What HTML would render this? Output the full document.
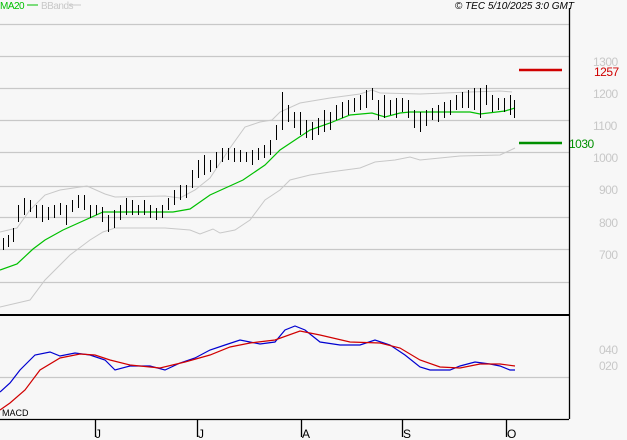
<!DOCTYPE html><html><head><meta charset="utf-8"><style>
html,body{margin:0;padding:0;background:#f7f7f7;width:627px;height:440px;overflow:hidden;font-family:"Liberation Sans",sans-serif}
</style></head><body>
<svg width="627" height="440" xmlns="http://www.w3.org/2000/svg" style="position:absolute;left:0;top:0">
<rect width="627" height="440" fill="#f7f7f7"/>
<g stroke="#c8c8c8" stroke-width="1.2">
<path d="M0 24.5H569M0 56.5H569M0 88.5H569M0 120.5H569M0 152.5H569M0 186.5H569M0 217.5H569M0 249.5H569M0 282.5H569M0 377.5H569"/>
</g>
<g fill="#c8c8c8" font-size="12" letter-spacing="-0.5">
<text x="593" y="66">1300</text><text x="593" y="98">1200</text><text x="593" y="130">1100</text>
<text x="593" y="162">1000</text><text x="599" y="194">900</text><text x="599" y="227">800</text><text x="599" y="259">700</text>
<text x="599" y="354">040</text><text x="599" y="370">020</text>
</g>
<g fill="none" stroke="#c8c8c8" stroke-width="1">
<polyline points="0,232 17,228 30,210 45,195 60,190 87,186 105,194 115,197 165,196 180,198 195,190 210,178 230,148 245,127 260,122 272,120 280,112 300,103 330,98 360,94 372,90 380,93 420,94 470,92 500,91 512,92"/>
<polyline points="0,307 30,300 45,280 70,255 90,240 103,232 115,228 165,228 190,230 200,234 213,229 220,233 235,230 250,220 265,200 280,190 290,180 310,175 330,172 360,168 375,162 395,160 410,157 420,160 440,158 460,156 500,155 515,148"/>
</g>
<polyline fill="none" stroke="#00c000" stroke-width="1.2" points="0,270 17,264 33,249 45,240 63,230 103,212 125,212 173,212 190,209 210,195 243,180 265,165 280,150 295,140 310,130 330,123 350,115 372,113 385,117 400,113 410,112 470,112 480,114 505,111 515,108"/>
<path fill="none" stroke="#000" stroke-width="1" shape-rendering="crispEdges" d="M3.5 238V250M8.5 235V247M13.5 228V242M18.5 205V222M24.5 198V215M30.5 200V212M36.5 205V218M42.5 205V222M48.5 207V220M54.5 205V218M60.5 203V215M66.5 205V225M72.5 200V212M78.5 195V208M84.5 195V210M90.5 205V218M96.5 205V215M102.5 207V222M108.5 215V232M114.5 210V228M120.5 205V220M126.5 198V215M132.5 200V215M138.5 205V215M144.5 200V215M150.5 205V218M156.5 208V220M162.5 205V218M168.5 198V210M174.5 190V205M180.5 185V200M186.5 185V198M192.5 170V188M198.5 160V178M204.5 155V175M210.5 160V172M216.5 152V168M222.5 148V162M228.5 148V160M234.5 148V162M240.5 150V162M246.5 152V162M252.5 150V165M258.5 148V160M264.5 145V158M270.5 140V155M276.5 125V140M282.5 92V130M288.5 105V122M294.5 112V128M300.5 112V135M306.5 120V138M312.5 122V140M318.5 118V135M324.5 110V132M330.5 112V130M336.5 105V120M342.5 102V118M348.5 100V115M354.5 98V112M360.5 95V110M366.5 90V108M372.5 88V100M378.5 100V120M384.5 95V118M390.5 100V115M396.5 98V118M402.5 98V112M408.5 100V118M414.5 110V128M420.5 112V132M426.5 110V126M432.5 108V120M438.5 105V122M444.5 102V118M450.5 100V115M456.5 95V110M462.5 92V108M468.5 90V108M474.5 88V110M480.5 88V118M486.5 85V105M492.5 95V112M498.5 98V110M504.5 98V112M510.5 95V115M514.5 100V118"/>
<path stroke="#d00000" stroke-width="2.5" d="M519 70H562"/>
<path stroke="#009000" stroke-width="2.5" d="M519 143H562"/>
<text x="594" y="76" fill="#d00000" font-size="12" letter-spacing="-0.5">1257</text>
<text x="569" y="148" fill="#009000" font-size="12" letter-spacing="-0.5">1030</text>
<polyline fill="none" stroke="#0000d0" stroke-width="1.2" points="0,392 10,383 20,370 35,355 50,352 60,356 75,353 90,355 105,360 115,370 130,366 150,366 165,370 180,363 195,358 210,350 225,345 240,340 260,344 275,342 285,330 295,326 305,330 320,342 340,345 360,345 375,340 390,345 405,355 420,367 430,370 450,370 460,366 475,362 490,364 500,366 510,370 515,370"/>
<polyline fill="none" stroke="#d00000" stroke-width="1.2" points="0,410 10,403 25,390 40,370 60,358 80,354 95,355 110,360 130,365 160,368 185,362 210,355 230,347 250,343 275,340 300,331 320,335 350,342 380,343 400,348 420,360 440,367 460,368 480,364 500,364 515,366"/>
<path stroke="#000" stroke-width="1.3" fill="none" d="M569.5 8V419M0 419.5H569M95.5 419V437M197.5 419V437M301.5 419V437M402.5 419V437M506.5 419V437"/>
<path stroke="#000" stroke-width="2" d="M0 315H569"/>
<g font-size="12" fill="#000"><text x="95" y="438">J</text><text x="198" y="438">J</text><text x="302" y="438">A</text><text x="403" y="438">S</text><text x="507" y="438">O</text></g>
<text x="2" y="416" font-size="9" fill="#000">MACD</text>
<text x="0" y="9" font-size="10" fill="#00c000" letter-spacing="-0.5">MA20</text>
<path stroke="#00c000" d="M27 5H38"/>
<text x="41" y="9" font-size="10" fill="#c8c8c8" letter-spacing="-0.5">BBands</text>
<path stroke="#c8c8c8" d="M70 5H81"/>
<text x="574" y="9" font-size="10" fill="#000" font-style="italic" text-anchor="end">© TEC 5/10/2025 3:0 GMT</text>
</svg>
</body></html>
